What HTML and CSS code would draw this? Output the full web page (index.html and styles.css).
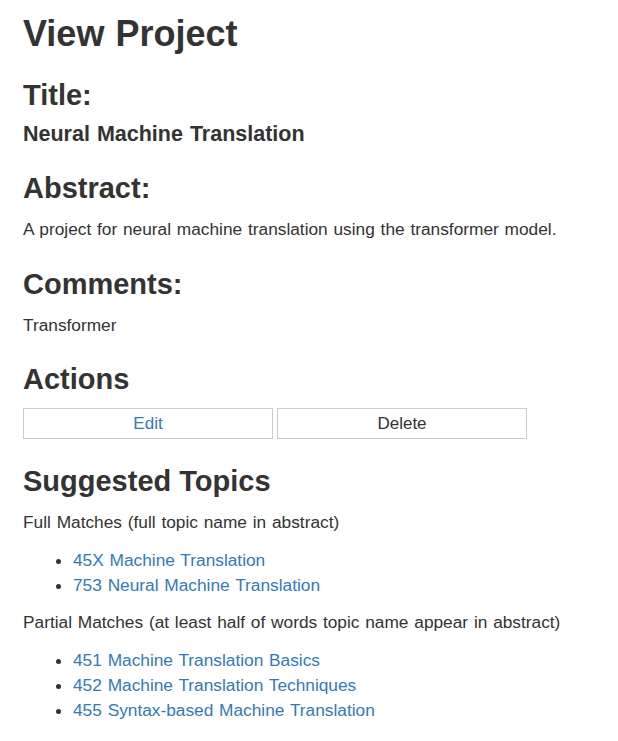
FILE: index.html
```html
<!DOCTYPE html>
<html lang="en">
<head>
<meta charset="utf-8">
<title>View Project</title>
<link rel="stylesheet" href="styles.css">
</head>
<body>
<main class="page">
  <h1 class="page-title">View Project</h1>

  <h2 class="section-title section-title--first">Title:</h2>
  <h4 class="project-name">Neural Machine Translation</h4>

  <h2 class="section-title">Abstract:</h2>
  <p class="text">A project for neural machine translation using the transformer model.</p>

  <h2 class="section-title">Comments:</h2>
  <p class="text">Transformer</p>

  <h2 class="section-title section-title--actions">Actions</h2>
  <div class="actions">
    <a class="btn btn--link" href="#">Edit</a>
    <button class="btn" type="button">Delete</button>
  </div>

  <h2 class="section-title section-title--after-actions">Suggested Topics</h2>
  <p class="text">Full Matches (full topic name in abstract)</p>
  <ul class="topics">
    <li><a class="link" href="#">45X Machine Translation</a></li>
    <li><a class="link" href="#">753 Neural Machine Translation</a></li>
  </ul>
  <p class="text">Partial Matches (at least half of words topic name appear in abstract)</p>
  <ul class="topics">
    <li><a class="link" href="#">451 Machine Translation Basics</a></li>
    <li><a class="link" href="#">452 Machine Translation Techniques</a></li>
    <li><a class="link" href="#">455 Syntax-based Machine Translation</a></li>
  </ul>
</main>
</body>
</html>
```

FILE: styles.css
```css
html, body {
  margin: 0;
  padding: 0;
  background: #fff;
}

body {
  font-family: "Liberation Sans", Arial, Helvetica, sans-serif;
  color: #333;
  font-size: 17.3px;
  line-height: 24px;
  word-spacing: 1px;
}

.page {
  padding: 14px 23px 20px;
}

.page-title {
  margin: 0;
  font-size: 36px;
  line-height: 40px;
  font-weight: bold;
  word-spacing: 1px;
}

.section-title {
  margin: 27px 0 13px;
  font-size: 29px;
  line-height: 32px;
  font-weight: bold;
  word-spacing: 0;
}

.section-title--first {
  margin-top: 25px;
  margin-bottom: 11px;
}

.section-title--actions {
  margin-top: 26px;
}

.section-title--after-actions {
  margin-top: 26px;
}

.project-name {
  margin: 0 0 -1px;
  font-size: 21.5px;
  line-height: 24px;
  font-weight: bold;
  word-spacing: 1px;
}

.text {
  margin: 0;
  font-size: 17.3px;
  line-height: 24px;
}

.actions {
  display: flex;
  gap: 4px;
}

.btn {
  box-sizing: border-box;
  display: block;
  width: 250px;
  height: 31px;
  margin: 0;
  padding: 0;
  border: 1px solid #ccc;
  background: #fff;
  color: #333;
  font-family: inherit;
  font-size: 17px;
  line-height: 29px;
  text-align: center;
  text-decoration: none;
}

.btn--link {
  color: #337ab7;
}

.topics {
  margin: 14px 0 12px;
  padding-left: 50px;
  list-style: disc;
}

.topics li {
  line-height: 25px;
}

.link {
  color: #337ab7;
  text-decoration: none;
}
```
